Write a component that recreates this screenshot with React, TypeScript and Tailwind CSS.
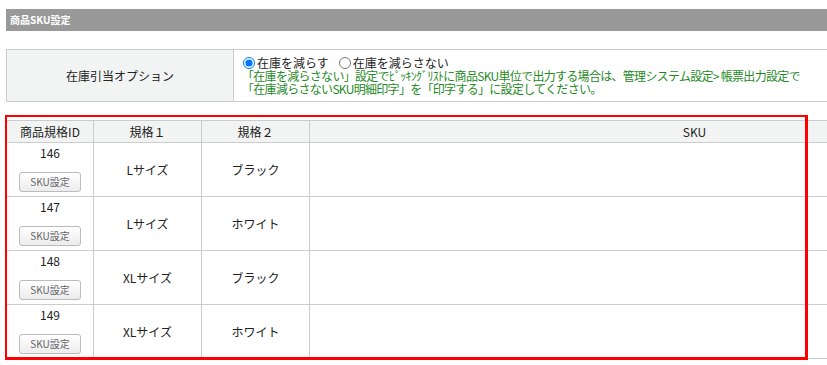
import React from 'react';

const rows = [
  { id: 146, size: 'Lサイズ', color: 'ブラック' },
  { id: 147, size: 'Lサイズ', color: 'ホワイト' },
  { id: 148, size: 'XLサイズ', color: 'ブラック' },
  { id: 149, size: 'XLサイズ', color: 'ホワイト' },
];

const App: React.FC = () => {
  return (
    <div
      className="relative w-[827px] h-[365px] overflow-hidden bg-white text-[#222]"
      style={{ fontFamily: '"Noto Sans CJK JP", "Noto Sans", sans-serif' }}
    >
      {/* section title bar */}
      <div className="mt-[9px] ml-[6px] h-[22px] bg-[#999999] pl-[4px] text-[10px] font-bold leading-[22px] text-white">
        商品SKU設定
      </div>

      {/* stock option */}
      <table className="mt-[18px] ml-[6px] w-[1100px] border-collapse text-[12px]">
        <tbody>
          <tr>
            <td className="h-[52px] w-[227px] border border-[#cccccc] bg-[#f2f3f3] text-center align-middle">
              在庫引当オプション
            </td>
            <td className="h-[52px] border border-[#cccccc] pl-[8px] align-middle leading-[13px]">
              <div className="flex items-center">
                <input type="radio" checked readOnly className="m-0 mr-[2px] ml-[1px] h-[12px] w-[12px] accent-[#0075ff]" />
                <span className="mr-[10px]">在庫を減らす</span>
                <input type="radio" readOnly checked={false} className="m-0 mr-[2px] h-[12px] w-[12px]" />
                <span>在庫を減らさない</span>
              </div>
              <div className="tracking-[-0.7px] text-[#1f8a1f]">
                「在庫を減らさない」設定でﾋﾟｯｷﾝｸﾞﾘｽﾄに商品SKU単位で出力する場合は、管理システム設定&gt; 帳票出力設定で
              </div>
              <div className="tracking-[-0.7px] text-[#1f8a1f]">「在庫減らさないSKU明細印字」を「印字する」に設定してください。</div>
            </td>
          </tr>
        </tbody>
      </table>

      {/* SKU table */}
      <table className="mt-[18px] ml-[6px] w-[1074px] border-collapse text-[12px]">
        <thead>
          <tr className="bg-[#f2f4f3]">
            <th className="h-[22px] w-[87px] border border-[#cccccc] font-normal">商品規格ID</th>
            <th className="h-[22px] w-[108px] border border-[#cccccc] font-normal">規格１</th>
            <th className="h-[22px] w-[108px] border border-[#cccccc] font-normal">規格２</th>
            <th className="h-[22px] border border-[#cccccc] font-normal">SKU</th>
          </tr>
        </thead>
        <tbody>
          {rows.map((r) => (
            <tr key={r.id}>
              <td className="h-[54px] border border-[#cccccc] p-0 align-top">
                <div className="flex flex-col items-center pt-[2px]">
                  <span className="leading-[16px]">{r.id}</span>
                  <button className="mt-[11px] h-[20px] w-[62px] rounded-[3px] border border-[#bbbbbb] bg-gradient-to-b from-white to-[#ececec] text-[10px] leading-[18px] text-[#666666]">
                    SKU設定
                  </button>
                </div>
              </td>
              <td className="h-[54px] border border-[#cccccc] text-center align-middle">{r.size}</td>
              <td className="h-[54px] border border-[#cccccc] text-center align-middle">{r.color}</td>
              <td className="h-[54px] border border-[#cccccc]"></td>
            </tr>
          ))}
        </tbody>
      </table>

      {/* red highlight annotation */}
      <div className="pointer-events-none absolute left-[5px] top-[115px] h-[245px] w-[803px] border-t-2 border-l-2 border-r-[3px] border-b-[3px] border-[#ff0000]" />
    </div>
  );
};

export default App;
